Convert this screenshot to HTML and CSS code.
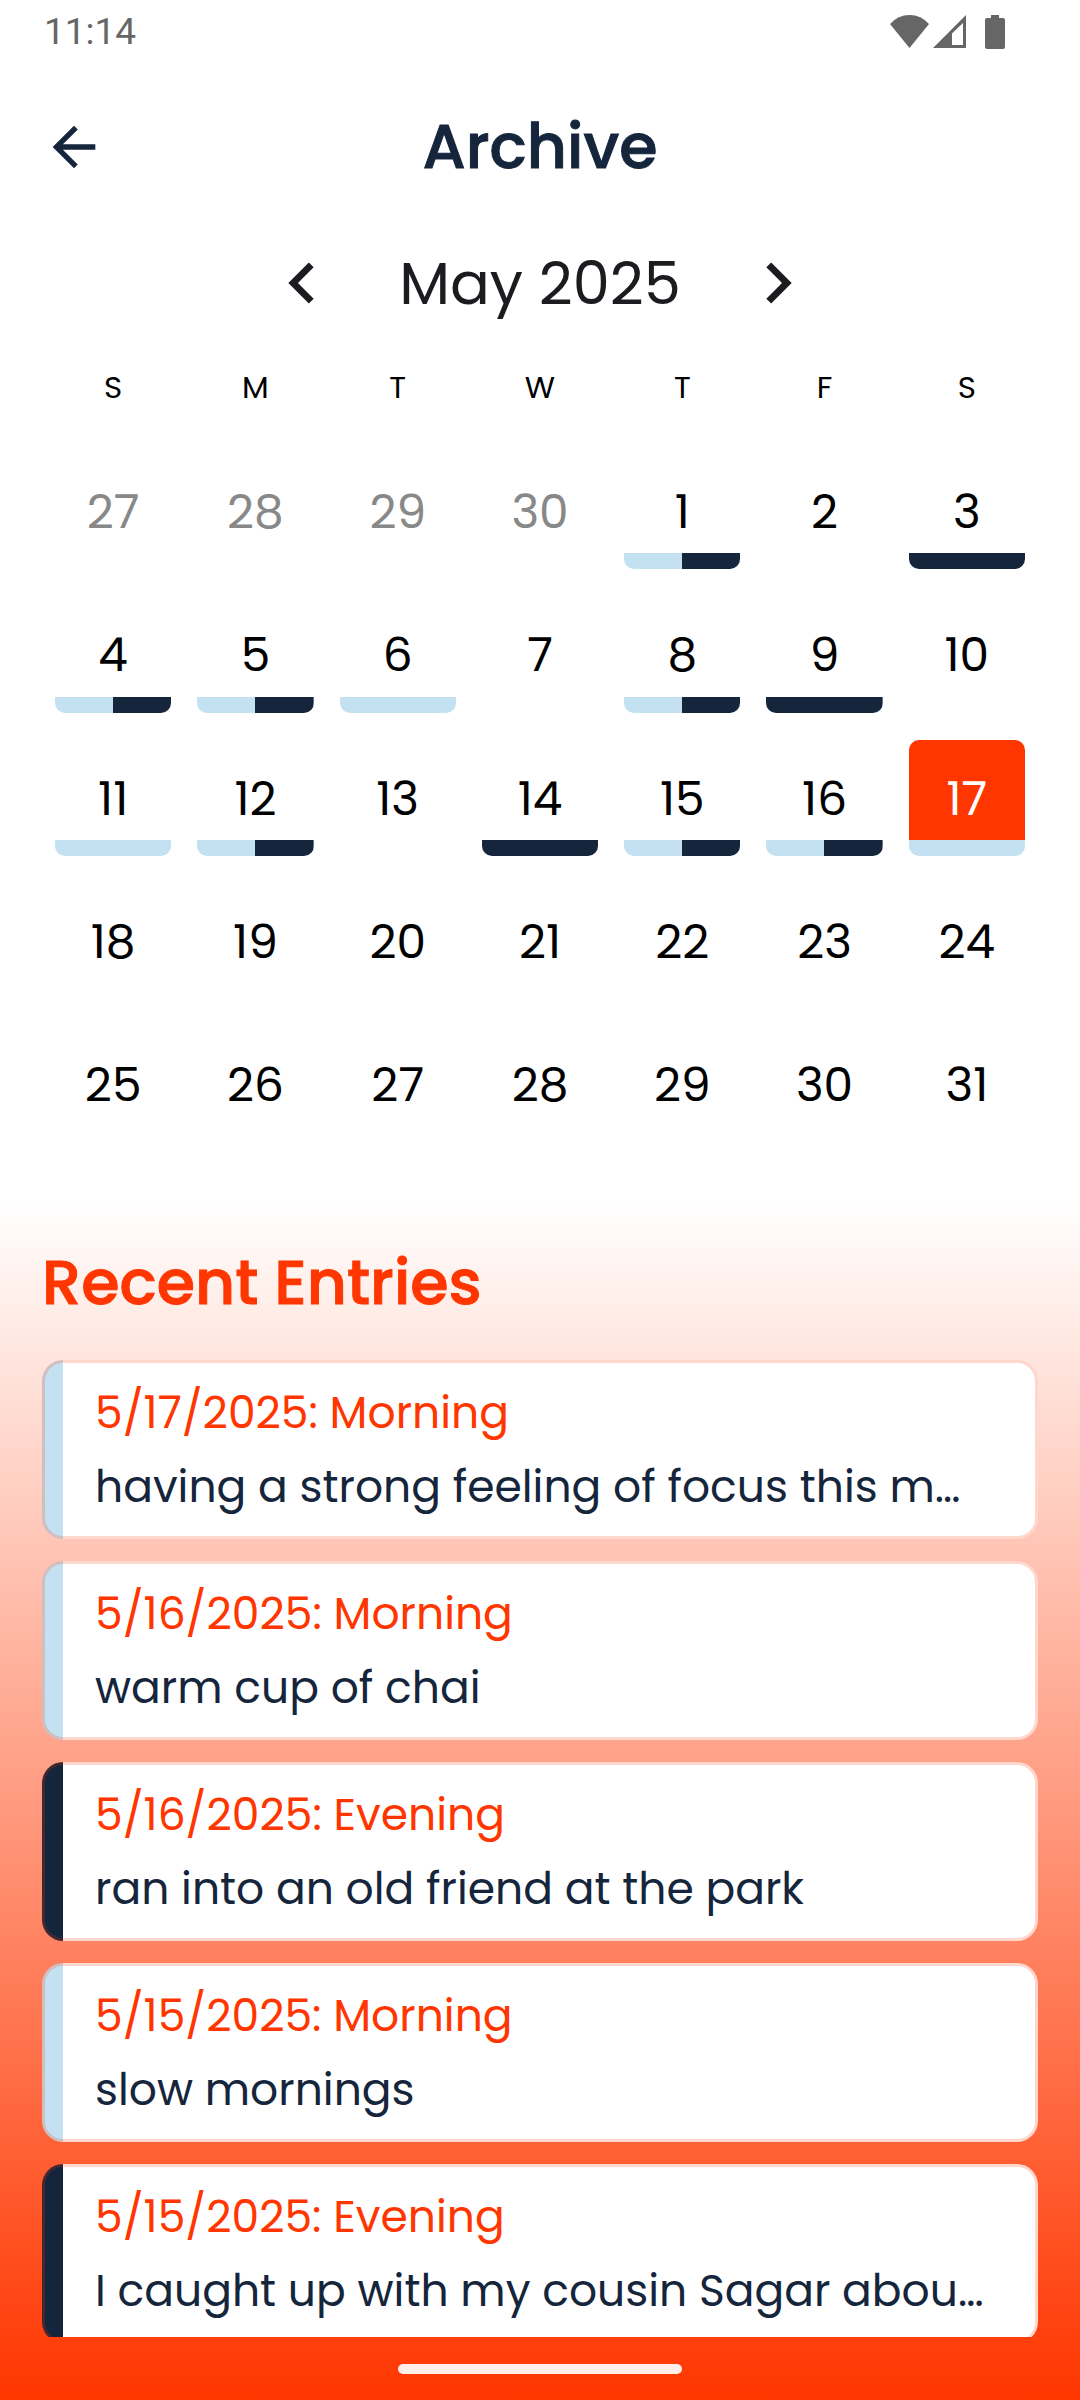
FILE: index.html
```html
<!DOCTYPE html>
<html lang="en">
<head>
<meta charset="utf-8">
<meta name="viewport" content="width=device-width, initial-scale=1">
<title>Archive</title>
<link rel="stylesheet" href="styles.css">
</head>
<body>
<div class="screen">
  <div class="status-bar">
    <time class="clock">11:14</time>
    <div class="status-icons">
      <svg class="wifi" viewBox="0 0 39 33" aria-hidden="true"><path d="M0 9Q8 0 19.500 0T39 9L19.500 33Z"/></svg>
      <svg class="signal" viewBox="0 0 33 33" aria-hidden="true"><path fill-rule="evenodd" d="M33 0V33H0ZM30 8 19 18.500V30H30Z"/></svg>
      <svg class="battery" viewBox="0 0 20 34" aria-hidden="true"><path d="M6 0H14V3H18Q20 3 20 5V32Q20 34 18 34H2Q0 34 0 32V5Q0 3 2 3H6Z"/></svg>
    </div>
  </div>

  <header class="app-bar">
    <button class="back" type="button" aria-label="Back">
      <svg viewBox="0 0 24 24" aria-hidden="true"><path d="M20 11H7.830l5.590-5.590L12 4l-8 8 8 8 1.410-1.410L7.830 13H20z"/></svg>
    </button>
    <h1 class="title">Archive</h1>
  </header>

  <main class="content">
    <section class="calendar" aria-labelledby="month">
      <div class="month-nav">
        <button class="step" type="button" aria-label="Previous month">
          <svg viewBox="0 0 24 24" aria-hidden="true"><path d="M15.410 7.410 14 6l-6 6 6 6 1.410-1.410L10.830 12z"/></svg>
        </button>
        <h2 class="month" id="month">May 2025</h2>
        <button class="step" type="button" aria-label="Next month">
          <svg viewBox="0 0 24 24" aria-hidden="true"><path d="M10 6 8.590 7.410 13.170 12l-4.580 4.590L10 18l6-6z"/></svg>
        </button>
      </div>
      <table class="days">
        <thead>
          <tr><th scope="col">S</th><th scope="col">M</th><th scope="col">T</th><th scope="col">W</th><th scope="col">T</th><th scope="col">F</th><th scope="col">S</th></tr>
        </thead>
        <tbody>
          <tr>
            <td><button class="day outside" type="button">27</button></td>
            <td><button class="day outside" type="button">28</button></td>
            <td><button class="day outside" type="button">29</button></td>
            <td><button class="day outside" type="button">30</button></td>
            <td><button class="day morning evening" type="button">1</button></td>
            <td><button class="day" type="button">2</button></td>
            <td><button class="day evening" type="button">3</button></td>
          </tr>
          <tr>
            <td><button class="day morning evening" type="button">4</button></td>
            <td><button class="day morning evening" type="button">5</button></td>
            <td><button class="day morning" type="button">6</button></td>
            <td><button class="day" type="button">7</button></td>
            <td><button class="day morning evening" type="button">8</button></td>
            <td><button class="day evening" type="button">9</button></td>
            <td><button class="day" type="button">10</button></td>
          </tr>
          <tr>
            <td><button class="day morning" type="button">11</button></td>
            <td><button class="day morning evening" type="button">12</button></td>
            <td><button class="day" type="button">13</button></td>
            <td><button class="day evening" type="button">14</button></td>
            <td><button class="day morning evening" type="button">15</button></td>
            <td><button class="day morning evening" type="button">16</button></td>
            <td><button class="day morning selected" type="button" aria-current="date">17</button></td>
          </tr>
          <tr>
            <td><button class="day" type="button">18</button></td>
            <td><button class="day" type="button">19</button></td>
            <td><button class="day" type="button">20</button></td>
            <td><button class="day" type="button">21</button></td>
            <td><button class="day" type="button">22</button></td>
            <td><button class="day" type="button">23</button></td>
            <td><button class="day" type="button">24</button></td>
          </tr>
          <tr>
            <td><button class="day" type="button">25</button></td>
            <td><button class="day" type="button">26</button></td>
            <td><button class="day" type="button">27</button></td>
            <td><button class="day" type="button">28</button></td>
            <td><button class="day" type="button">29</button></td>
            <td><button class="day" type="button">30</button></td>
            <td><button class="day" type="button">31</button></td>
          </tr>
        </tbody>
      </table>
    </section>

    <section class="recent" aria-labelledby="recent">
      <h2 class="section-title" id="recent">Recent Entries</h2>
      <ul class="entries">
        <li class="entry am"><h3 class="when">5/17/2025: Morning</h3><p class="note">having a strong feeling of focus this m…</p></li>
        <li class="entry am"><h3 class="when">5/16/2025: Morning</h3><p class="note">warm cup of chai</p></li>
        <li class="entry pm"><h3 class="when">5/16/2025: Evening</h3><p class="note">ran into an old friend at the park</p></li>
        <li class="entry am"><h3 class="when">5/15/2025: Morning</h3><p class="note">slow mornings</p></li>
        <li class="entry pm"><h3 class="when">5/15/2025: Evening</h3><p class="note">I caught up with my cousin Sagar abou…</p></li>
      </ul>
    </section>
  </main>

  <div class="gesture-bar"><span class="handle"></span></div>
</div>
</body>
</html>
```

FILE: styles.css
```css
:root {
  --red: #ff3600;
  --navy: #15253c;
  --sky: #c4e1f2;
  --ink: #1b1b20;
}

* {
  box-sizing: border-box;
}

body,
h1,
h2,
h3,
p,
ul {
  margin: 0;
  padding: 0;
}

body {
  font-family: Poppins, Inter, sans-serif;
  font-feature-settings: "cv11";
  color: var(--navy);
}

button {
  padding: 0;
  border: 0;
  background: none;
  color: inherit;
  font: inherit;
  font-feature-settings: inherit;
}

svg {
  display: block;
  fill: currentColor;
}

.screen {
  display: flex;
  flex-direction: column;
  height: 100vh;
  background: linear-gradient(#fff 50%, var(--red) 100%);
}

.status-bar {
  display: flex;
  align-items: center;
  justify-content: space-between;
  height: 63px;
  padding: 0 75px 0 44px;
  color: #666;
}

.clock {
  font: 37px Roboto, sans-serif;
}

.status-icons {
  display: flex;
  align-items: center;
}

.wifi {
  width: 39px;
  height: 33px;
}

.signal {
  width: 33px;
  height: 33px;
  margin: 0 19px 0 4px;
}

.battery {
  width: 20px;
  height: 34px;
}

.app-bar {
  display: grid;
  grid-template-columns: 64px 1fr 64px;
  align-items: center;
  height: 168px;
  padding: 0 42px;
}

.back svg {
  width: 64px;
  height: 64px;
}

.title,
.section-title {
  font-size: 62px;
  font-weight: 500;
  line-height: 80px;
  -webkit-text-stroke: 1px currentColor;
}

.title {
  text-align: center;
}

.content {
  display: flex;
  flex: 1;
  flex-direction: column;
  min-height: 0;
  padding: 0 42px;
}

.month-nav {
  display: flex;
  align-items: center;
  justify-content: center;
  gap: 56px;
  height: 104px;
  color: var(--ink);
}

.step svg {
  width: 82px;
  height: 82px;
}

.month {
  font-size: 59px;
  font-weight: 400;
}

.days {
  width: 100%;
  table-layout: fixed;
  border-collapse: collapse;
  color: #000;
}

.days th {
  height: 104px;
  padding: 0;
  font-size: 31px;
  font-weight: 400;
}

.days td {
  padding: 14px 13px 13px;
}

.day {
  display: block;
  width: 100%;
  aspect-ratio: 1;
  padding-top: 2px;
  border-radius: 10px;
  background: linear-gradient(90deg, var(--start, transparent) 50%, var(--end, transparent) 50%) bottom / 100% 16px no-repeat;
  font-size: 47px;
  text-align: center;
}

.outside {
  color: #888;
}

.morning {
  --start: var(--sky);
  --end: var(--sky);
}

.evening {
  --start: var(--navy);
  --end: var(--navy);
}

.morning.evening {
  --start: var(--sky);
}

.selected {
  background-color: var(--red);
  color: #fff;
}

.recent {
  display: flex;
  flex: 1;
  flex-direction: column;
  gap: 37px;
  min-height: 0;
  padding-top: 87px;
}

.section-title {
  color: var(--red);
}

.entries {
  display: flex;
  flex: 1;
  flex-direction: column;
  gap: 22px;
  min-height: 0;
  overflow-y: auto;
  scrollbar-width: none;
  list-style: none;
}

.entry {
  flex: none;
  padding: 13px 42px 12px 50px;
  border: 3px solid rgb(255 54 0 / 20%);
  border-radius: 21px;
  background: linear-gradient(90deg, var(--mark) 21px, #fff 21px) border-box;
  font-size: 44px;
  line-height: 74px;
  white-space: nowrap;
}

.am {
  --mark: var(--sky);
}

.pm {
  --mark: var(--navy);
}

.when {
  color: var(--red);
  font-size: inherit;
  font-weight: 400;
}

.note {
  overflow: hidden;
  text-overflow: ellipsis;
}

.gesture-bar {
  display: flex;
  align-items: center;
  justify-content: center;
  height: 63px;
}

.handle {
  width: 284px;
  height: 10px;
  border-radius: 5px;
  background: #ffefeb;
}
```
